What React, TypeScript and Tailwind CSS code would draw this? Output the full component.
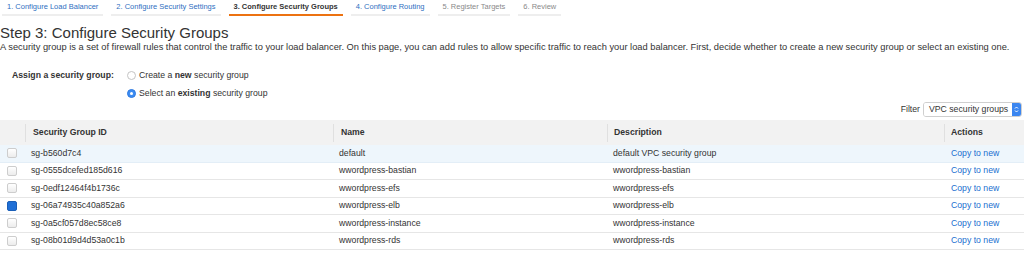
import * as React from "react";

// ─── Data ─────────────────────────────────────────────────────────────────────

const TABS = [
  { label: "1. Configure Load Balancer", state: "done" },
  { label: "2. Configure Security Settings", state: "done" },
  { label: "3. Configure Security Groups", state: "active" },
  { label: "4. Configure Routing", state: "done" },
  { label: "5. Register Targets", state: "todo" },
  { label: "6. Review", state: "todo" },
];

const GROUPS = [
  { id: "sg-b560d7c4", name: "default", desc: "default VPC security group" },
  { id: "sg-0555dcefed185d616", name: "wwordpress-bastian", desc: "wwordpress-bastian" },
  { id: "sg-0edf12464f4b1736c", name: "wwordpress-efs", desc: "wwordpress-efs" },
  { id: "sg-06a74935c40a852a6", name: "wwordpress-elb", desc: "wwordpress-elb", checked: true },
  { id: "sg-0a5cf057d8ec58ce8", name: "wwordpress-instance", desc: "wwordpress-instance" },
  { id: "sg-08b01d9d4d53a0c1b", name: "wwordpress-rds", desc: "wwordpress-rds" },
];

const COLS = "grid grid-cols-[25px_308px_274px_337px_1fr]";

// ─── Bits ─────────────────────────────────────────────────────────────────────

function Radio({ on }: { on?: boolean }) {
  return on ? (
    <span className="w-[9px] h-[9px] rounded-full bg-[#3c8cf2] border border-[#2f7ae0] flex items-center justify-center">
      <span className="w-[3px] h-[3px] rounded-full bg-white" />
    </span>
  ) : (
    <span className="w-[9px] h-[9px] rounded-full bg-white border border-[#c4c4c4]" />
  );
}

function Checkbox({ on }: { on?: boolean }) {
  return on ? (
    <span className="w-[10px] h-[10px] rounded-[2px] bg-[#1f6fd6] border border-[#1a5fb8]" />
  ) : (
    <span className="w-[10px] h-[10px] rounded-[2px] bg-gradient-to-b from-white to-[#ececec] border border-[#cdcdcd]" />
  );
}

// ─── Page ─────────────────────────────────────────────────────────────────────

export default function App() {
  return (
    <div className="w-[1024px] h-[259px] bg-white text-[#333] overflow-hidden font-['Liberation_Sans',Arial,sans-serif]">
      {/* Wizard tabs */}
      <div className="flex gap-[8px] pl-[2px] h-[16px]">
        {TABS.map((t) => (
          <div
            key={t.label}
            className={
              "px-[5px] text-[7.5px] leading-[13px] border-b-2 " +
              (t.state === "active"
                ? "border-[#ec7211] text-[#333] font-bold"
                : t.state === "done"
                ? "border-[#eeeeee] text-[#2f6fbf]"
                : "border-[#eeeeee] text-[#8a8a8a]")
            }
          >
            {t.label}
          </div>
        ))}
      </div>

      {/* Heading */}
      <h1 className="mt-[8px] h-[18px] text-[15px] leading-[18px] text-[#333]">
        Step 3: Configure Security Groups
      </h1>
      <p className="h-[11px] text-[9.3px] leading-[11px] text-[#333] whitespace-nowrap">
        A security group is a set of firewall rules that control the traffic to your load balancer. On this page, you can add rules to allow specific traffic to reach your load balancer. First, decide whether to create a new security group or select an existing one.
      </p>

      {/* Assign */}
      <div className="mt-[16px] flex text-[8.7px] leading-[12px]">
        <div className="w-[127px] pl-[12px] font-bold">Assign a security group:</div>
        <div className="flex flex-col gap-[6px]">
          <label className="flex items-center gap-[3px]">
            <Radio />
            <span>
              Create a <b>new</b> security group
            </span>
          </label>
          <label className="flex items-center gap-[3px]">
            <Radio on />
            <span>
              Select an <b>existing</b> security group
            </span>
          </label>
        </div>
      </div>

      {/* Filter */}
      <div className="mt-[3px] h-[15px] flex justify-end items-center pr-[2px] text-[8.7px]">
        <span className="mr-[3px]">Filter</span>
        <div className="h-[15px] flex items-stretch border border-[#cfcfcf] rounded-[3px] overflow-hidden">
          <span className="w-[88px] pl-[5px] flex items-center bg-white">VPC security groups</span>
          <span className="w-[9px] bg-[#3b86f0] flex items-center justify-center">
            <svg width="5" height="9" viewBox="0 0 5 9" fill="none" stroke="white" strokeWidth="1">
              <path d="M1 3.5 L2.5 2 L4 3.5" />
              <path d="M1 5.5 L2.5 7 L4 5.5" />
            </svg>
          </span>
        </div>
      </div>

      {/* Table */}
      <div className="mt-[3px] text-[8.7px]">
        <div className={COLS + " h-[25px] bg-[#f2f2f2] font-bold items-center"}>
          <div />
          <div className="h-[18px] border-l border-[#e0e0e0] pl-[7px] flex items-center">Security Group ID</div>
          <div className="h-[18px] border-l border-[#e0e0e0] pl-[7px] flex items-center">Name</div>
          <div className="h-[18px] border-l border-[#e0e0e0] pl-[6px] flex items-center">Description</div>
          <div className="h-[18px] border-l border-[#e0e0e0] pl-[6px] flex items-center">Actions</div>
        </div>
        {GROUPS.map((g, i) => (
          <div
            key={g.id}
            className={
              COLS +
              " h-[17.5px] items-center border-b " +
              (i === 0 ? "bg-[#eef6fc] border-[#e3eef7]" : "border-[#e6e6e6]")
            }
          >
            <div className="pl-[7px] flex items-center">
              <Checkbox on={g.checked} />
            </div>
            <div className="pl-[6px]">{g.id}</div>
            <div className="pl-[6px]">{g.name}</div>
            <div className="pl-[6px]">{g.desc}</div>
            <div className="pl-[7px] text-[#1a6fd0]">Copy to new</div>
          </div>
        ))}
      </div>
    </div>
  );
}
